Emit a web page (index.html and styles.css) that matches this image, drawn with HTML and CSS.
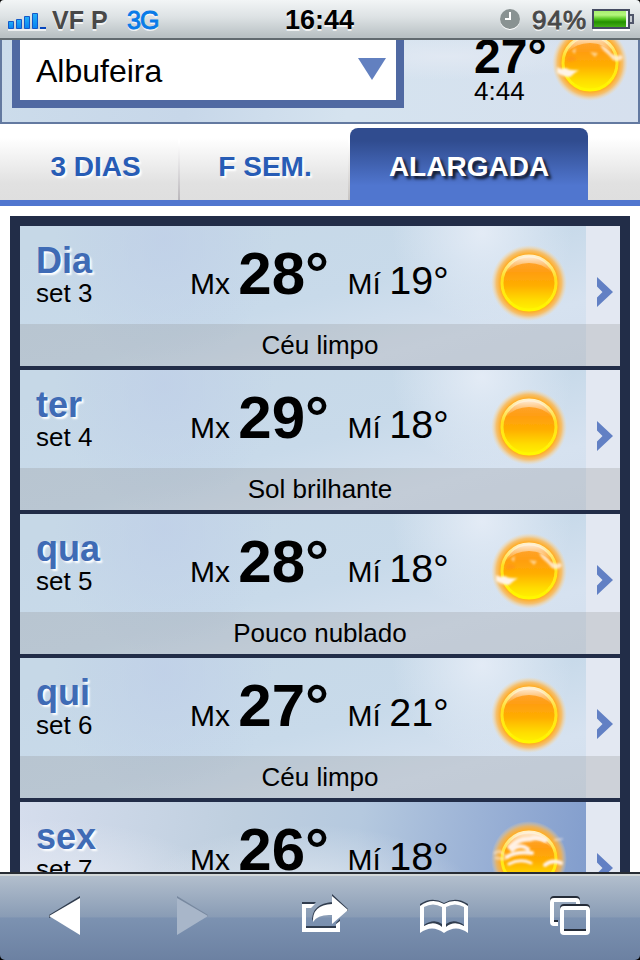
FILE: index.html
```
<!DOCTYPE html>
<html lang="pt">
<head>
<meta charset="utf-8">
<title>Albufeira</title>
<link rel="stylesheet" href="styles.css">
</head>
<body>
<svg class="defs" width="0" height="0" aria-hidden="true">
  <defs>
    <linearGradient id="disc" x1="0" y1="0" x2="0" y2="1"><stop offset="0" stop-color="#ffa53c"/><stop offset=".3" stop-color="#ff9e10"/><stop offset=".55" stop-color="#ffae00"/><stop offset=".82" stop-color="#ffdc00"/><stop offset="1" stop-color="#fff200"/></linearGradient>
    <linearGradient id="rim" x1="0" y1="0" x2="0" y2="1"><stop offset="0" stop-color="#fff0c8"/><stop offset=".4" stop-color="#ffe020"/><stop offset="1" stop-color="#fff800"/></linearGradient>
    <linearGradient id="shine" x1="0" y1="0" x2="0" y2="1"><stop offset="0" stop-color="#fff1df" stop-opacity=".95"/><stop offset="1" stop-color="#ffe0c0" stop-opacity="0"/></linearGradient>
    <radialGradient id="glow"><stop offset=".76" stop-color="#ffad26"/><stop offset=".86" stop-color="#ffb545" stop-opacity=".75"/><stop offset="1" stop-color="#ffd898" stop-opacity="0"/></radialGradient>
    <filter id="soft" x="-20%" y="-20%" width="140%" height="140%"><feGaussianBlur stdDeviation=".7"/></filter>
    <filter id="haze" x="-30%" y="-50%" width="160%" height="200%"><feGaussianBlur stdDeviation="1.1"/></filter>
    <symbol id="sun" viewBox="0 0 80 80">
      <circle cx="40" cy="40" r="38" fill="url(#glow)"/>
      <circle cx="40" cy="40" r="27" fill="url(#disc)" stroke="url(#rim)" stroke-width="3" filter="url(#soft)"/>
      <path d="M17 30Q22 14 40 13Q58 14 63 30Q54 20 40 20Q26 20 17 30Z" fill="url(#shine)" filter="url(#soft)"/>
    </symbol>
    <symbol id="sun-few" viewBox="0 0 80 80">
      <use href="#sun"/>
      <path d="M7 44Q10 47 16 45Q20 48 29 47Q24 50 20 54Q14 54 7 50Z" fill="#fff4e6" filter="url(#haze)"/>
      <path d="M50 21Q58 25 62 31L68 33Q72 30 73 35Q69 40 63 37Q58 31 54 28Q51 25 50 21Z" fill="#fff0df" opacity=".85" filter="url(#haze)"/>
      <path d="M40 29l8 1-3 4zM22 28l4-3-1 6z" fill="#ffe0b0" opacity=".8" filter="url(#haze)"/>
      <path d="M17 34Q23 31 27 36Q23 39 17 39z" fill="#ff9418" opacity=".7" filter="url(#haze)"/>
    </symbol>
    <symbol id="sun-cloud" viewBox="0 0 80 80">
      <use href="#sun"/>
      <g fill="none" stroke="#fff1e6" stroke-linecap="round" filter="url(#haze)">
        <path d="M21 28Q30 19 41 20Q48 17 56 21" stroke-width="5"/>
        <path d="M23 31Q31 24 39 30" stroke-width="4"/>
        <path d="M18 38Q27 32 43 34" stroke-width="4"/>
        <path d="M6 34Q11 30 15 36M7 39L16 40" stroke-width="3" opacity=".5"/>
        <path d="M20 45Q31 39 42 44" stroke-width="3"/>
        <path d="M56 46Q63 40 72 44" stroke-width="4"/>
        <path d="M66 21L73 20" stroke-width="2" opacity=".5"/>
      </g>
    </symbol>
    <symbol id="chevron" viewBox="0 0 18 30"><path d="M1 0L17 15L1 30V20.500L6.500 15L1 9.500Z" fill="#6280c4"/></symbol>
    <linearGradient id="bars" x1="0" y1="0" x2="0" y2="1"><stop offset="0" stop-color="#24b0f8"/><stop offset="1" stop-color="#0782f0"/></linearGradient>
    <linearGradient id="charge" x1="0" y1="0" x2="0" y2="1"><stop offset="0" stop-color="#a8f070"/><stop offset=".25" stop-color="#b4f67c"/><stop offset=".5" stop-color="#54c51e"/><stop offset=".68" stop-color="#239000"/><stop offset="1" stop-color="#43af18"/></linearGradient>
  </defs>
</svg>
<div class="phone">
  <header class="status">
    <svg class="signal" width="40" height="20" viewBox="0 0 40 20"><path d="M0 17h38v2H0z" fill="#fff" opacity=".7"/><g fill="url(#bars)" stroke="#1458c8" stroke-width="1"><path d="M.5 9.500h5v7h-5z"/><path d="M8.500 7.500h5v9h-5z"/><path d="M16.500 4.500h5v12h-5z"/><path d="M24.500 1.500h5v15h-5z"/></g><path d="M32 15h6v2h-6z" fill="#0646bd"/></svg>
    <span class="carrier">VF P</span>
    <span class="network">3G</span>
    <span class="clock">16:44</span>
    <svg class="alarm" width="22" height="22" viewBox="0 0 22 22"><circle cx="11" cy="12" r="10" fill="#fff"/><circle cx="11" cy="11" r="10" fill="#899292"/><path d="M11 4v7H6" fill="none" stroke="#fff" stroke-width="2"/></svg>
    <span class="percent">94%</span>
    <svg class="battery" width="43" height="22" viewBox="0 0 43 22"><path d="M1 20h37v2H1z" fill="#fff"/><path d="M38 6h3v8h-3" fill="#c8cdd3" stroke="#50566b" stroke-width="2"/><path d="M1 1h36v18H1z" fill="#eef2f3" stroke="#454b62" stroke-width="2"/><path d="M2 2h32v16H2z" fill="url(#charge)"/></svg>
  </header>

  <main class="page">
    <section class="place">
      <div class="select"><span>Albufeira</span><svg width="28" height="22" viewBox="0 0 28 22"><path d="M0 0h28L14 22z" fill="#6280c0"/></svg></div>
      <div class="now"><b>27°</b><span>4:44</span></div>
      <svg class="now-icon" width="80" height="80"><use href="#sun-few"/></svg>
    </section>

    <nav class="tabs">
      <a class="tab first">3 DIAS</a>
      <a class="tab second">F SEM.</a>
      <a class="tab active">ALARGADA</a>
    </nav>

    <section class="days">
      <article class="day">
        <div class="date"><b>Dia</b><span>set 3</span></div>
        <div class="max">Mx <b>28°</b></div><div class="min">Mí <span>19°</span></div>
        <svg class="icon" width="80" height="80"><use href="#sun"/></svg>
        <div class="more"><svg width="18" height="30"><use href="#chevron"/></svg></div>
        <p class="summary">Céu limpo</p>
      </article>
      <article class="day">
        <div class="date"><b>ter</b><span>set 4</span></div>
        <div class="max">Mx <b>29°</b></div><div class="min">Mí <span>18°</span></div>
        <svg class="icon" width="80" height="80"><use href="#sun"/></svg>
        <div class="more"><svg width="18" height="30"><use href="#chevron"/></svg></div>
        <p class="summary">Sol brilhante</p>
      </article>
      <article class="day">
        <div class="date"><b>qua</b><span>set 5</span></div>
        <div class="max">Mx <b>28°</b></div><div class="min">Mí <span>18°</span></div>
        <svg class="icon" width="80" height="80"><use href="#sun-few"/></svg>
        <div class="more"><svg width="18" height="30"><use href="#chevron"/></svg></div>
        <p class="summary">Pouco nublado</p>
      </article>
      <article class="day">
        <div class="date"><b>qui</b><span>set 6</span></div>
        <div class="max">Mx <b>27°</b></div><div class="min">Mí <span>21°</span></div>
        <svg class="icon" width="80" height="80"><use href="#sun"/></svg>
        <div class="more"><svg width="18" height="30"><use href="#chevron"/></svg></div>
        <p class="summary">Céu limpo</p>
      </article>
      <article class="day cloudy">
        <div class="date"><b>sex</b><span>set 7</span></div>
        <div class="max">Mx <b>26°</b></div><div class="min">Mí <span>18°</span></div>
        <svg class="icon" width="80" height="80"><use href="#sun-cloud"/></svg>
        <div class="more"><svg width="18" height="30"><use href="#chevron"/></svg></div>
      </article>
    </section>
  </main>

  <footer class="toolbar">
    <svg width="32" height="40" viewBox="0 0 32 40"><path d="M0 19L31 0v4L0 22z" fill="#303c4e"/><path d="M0 20L31 2v37z" fill="#fff"/></svg>
    <svg width="32" height="40" viewBox="0 0 32 40"><path d="M0 0L31 19v2L0 3z" fill="#7889a0"/><path d="M0 2L31 20L0 39z" fill="#a8b6c9"/></svg>
    <svg width="48" height="40" viewBox="0 0 48 40">
      <path d="M0 6h14l-3 3H0zM4 30h30v3H4zM34 27l4-4v4l-4 3z" fill="#303c4e"/>
      <path d="M0 8h13l-4 4H4v20h30v-4l4-3v11H0z" fill="#fff"/>
      <path d="M30-2L46 13v2H30zM10 23Q11 8 30 6v4L11 25z" fill="#303c4e"/>
      <path d="M30 0L46 14L30 28v-9Q16 18 11 26Q10 9 30 8z" fill="#fff"/>
    </svg>
    <svg class="book" width="48" height="36" viewBox="0 0 48 36">
      <path d="M0 9V5Q12-3 24 4Q36-3 48 5v4Q36 1 24 7Q12 1 0 9zM4 26Q14 19 22 25v4H4zM26 25Q34 19 44 26v3H26z" fill="#303c4e"/>
      <path fill-rule="evenodd" d="M0 7Q12-2 24 5Q36-2 48 7V34Q36 25 24 34Q12 25 0 34zM4 8V27Q14 21 22 28V8Q13 3 4 8zM26 8V28Q34 21 44 27V8Q35 3 26 8z" fill="#fff"/>
    </svg>
    <svg width="42" height="40" viewBox="0 0 42 40"><g fill="none" stroke-width="4"><path d="M8 26H4Q2 26 2 24V4Q2 2 4 2H26Q28 2 28 4V8" stroke="#252c38"/><path d="M8 28H4Q2 28 2 26V6Q2 4 4 4H26Q28 4 28 6V10" stroke="#fff"/><rect x="12" y="10" width="26" height="25" rx="2" stroke="#252c38"/><rect x="12" y="12" width="26" height="25" rx="2" stroke="#fff"/></g></svg>
  </footer>
</div>
</body>
</html>
```
FILE: styles.css
```
* { box-sizing: border-box; }
body { margin: 0; background: #fff; font-family: "Liberation Sans", Arial, sans-serif; color: #000; }
.defs { position: absolute; }
.phone { width: 640px; height: 960px; display: flex; flex-direction: column; overflow: hidden; background: #000; }

.status { flex: none; height: 40px; display: flex; align-items: flex-start; padding-left: 8px; background: linear-gradient(#f2f5f6, #dde2e4 45%, #bac2c5 95%); border-bottom: 2px solid #626b70; border-radius: 4px 4px 0 0; font-size: 26px; line-height: 40px; white-space: nowrap; text-shadow: 0 2px 0 rgba(255,255,255,.75); }
.signal { margin-top: 12px; }
.carrier { width: 56px; margin-left: 4px; color: #484848; font-size: 25px; font-weight: bold; }
.network { width: 34px; margin-left: 19px; font-size: 25px; letter-spacing: -1px; color: #087be8; -webkit-text-stroke: .9px #087be8; }
.clock { width: 70px; margin-left: 124px; font-size: 27px; font-weight: bold; }
.alarm { margin: 8px 0 0 144px; }
.percent { width: 58px; margin-left: 11px; letter-spacing: 1px; color: #484848; -webkit-text-stroke: .9px #484848; }
.battery { margin: 9px 0 0 2px; }

.page { flex: none; height: 832px; overflow: hidden; background: #fff; }
.place { height: 84px; display: flex; border: solid #6379a0; border-width: 0 2px 2px; background: radial-gradient(ellipse at 70% 20%, rgba(226,233,243,.9), transparent 25%), linear-gradient(100deg, #ccdceb, #c7d7e9 30%, #d5e3ef 55%, #d6e0ee); }
.select { flex: none; width: 392px; height: 68px; margin-left: 10px; padding: 0 10px 0 16px; border: 8px solid #5069a2; border-top: 0; background: #fff; display: flex; justify-content: space-between; font-size: 32px; line-height: 62px; }
.select svg { margin-top: 18px; }
.now { flex: none; width: 76px; margin-left: 70px; margin-top: -7px; display: flex; flex-direction: column; }
.now b { font-size: 48px; line-height: 48px; }
.now span { font-size: 26px; line-height: 26px; margin-top: -3px; }
.now-icon { margin: -17px 0 0; flex: none; }

.tabs { height: 82px; padding-top: 4px; display: flex; background: linear-gradient(#fff 18%, #e1e1e1 78%, #dfdfdf); border-bottom: 6px solid #5076cf; font-size: 28px; font-weight: bold; line-height: 77px; text-align: center; }
.tab { color: #275cb5; text-shadow: 2px 2px 2px #fff; }
.first { width: 180px; padding-left: 13px; border-right: 2px solid; border-image: linear-gradient(#fff 20%, #b9b6ba) 1; border-width: 0 2px 0 0; }
.second { width: 170px; padding-left: 2px; border: solid; border-width: 0 2px 0 0; border-image: linear-gradient(#fff 20%, #c5c2c0) 1; }
.active { width: 238px; color: #fff; text-shadow: 3px 3px 3px #101828; background: linear-gradient(#304c8f 18%, #5076cf 80%); border-radius: 8px 8px 0 0; }

.days { height: 760px; margin: 10px 10px 0; padding: 10px; background: #222d48; display: flex; flex-direction: column; gap: 4px; }
.day { flex: none; height: 140px; display: grid; grid-template: 98px 42px / 170px 157.5px 146.5px 92px 34px; background: radial-gradient(ellipse 110px 130px at 24% 10%, rgba(191,207,232,.75), transparent), radial-gradient(ellipse 90px 90px at 77% 5%, rgba(230,237,247,.9), transparent), linear-gradient(165deg, #c6d8e7 10%, #c8daea 50%, #d6e2f0 75%, #d2deed); }
.cloudy { background: radial-gradient(ellipse 180px 80px at 5% 70%, #e6eaf3, transparent), radial-gradient(ellipse 170px 75px at 48% 70%, rgba(230,236,243,.85), transparent), linear-gradient(100deg, #d5dded, #bfcfdf 35%, #b5c9df 55%, #93abd3 80%, #7f9bcc 95%); }
.date { padding: 16px 0 0 16px; display: flex; flex-direction: column; }
.date b { color: #3f6bb5; font-size: 36px; line-height: 37px; text-shadow: 2px 2px 2px #fff; }
.date span { font-size: 26px; line-height: 28px; }
.max, .min { font-size: 30px; white-space: nowrap; }
.max { line-height: 95px; }
.min { line-height: 108px; }
.max b { font-size: 60px; }
.min span { font-size: 39.5px; }
.icon { margin: 17px 0 0 -5px; }
.more { grid-column: 5; background: #e3e8f2; grid-row: 1 / 3; padding: 51px 0 0 10px; }
.summary { grid-column: 1 / 6; grid-row: 2; z-index: 1; margin: 0; background: rgba(140,140,140,.25); text-align: center; font-size: 26px; line-height: 42px; }

.toolbar { height: 88px; display: grid; grid-template-columns: 128px 125px 118px 130px 1fr; padding: 22px 0 0 49px; border-top: 2px solid #272c34; box-shadow: inset 0 2px #d3d8d9; background: linear-gradient(#b4c0ce, #899cb5 50%, #7c92b1 51%, #6c81a2); border-radius: 0 0 5px 5px; }
.toolbar svg { overflow: visible; }
.book { margin-top: 3px; }
```
